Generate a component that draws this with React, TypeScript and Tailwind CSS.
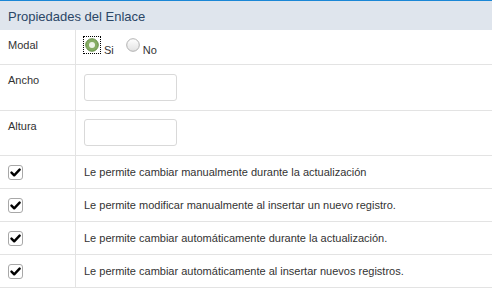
import React from 'react';

const options = [
  'Le permite cambiar manualmente durante la actualización',
  'Le permite modificar manualmente al insertar un nuevo registro.',
  'Le permite cambiar automáticamente durante la actualización.',
  'Le permite cambiar automáticamente al insertar nuevos registros.',
];

function Radio({ checked }: { checked?: boolean }) {
  return (
    <svg width="14" height="14" viewBox="0 0 14 14">
      <defs>
        <linearGradient id="off" x1="0" y1="0" x2="0" y2="1">
          <stop offset="0" stopColor="#ffffff" />
          <stop offset="1" stopColor="#e2e2e2" />
        </linearGradient>
      </defs>
      {checked ? (
        <>
          <circle cx="7" cy="7" r="6.3" fill="#86ac64" stroke="#5f8a40" strokeWidth="0.9" />
          <circle cx="7" cy="7" r="3" fill="#eef4e8" />
        </>
      ) : (
        <circle cx="7" cy="7" r="6.3" fill="url(#off)" stroke="#a9a9a9" strokeWidth="0.9" />
      )}
    </svg>
  );
}

function CheckBox() {
  return (
    <div className="w-[15px] h-[15px] rounded-[3px] border border-[#a8a8a8] bg-white flex items-center justify-center">
      <svg width="11" height="11" viewBox="0 0 11 11">
        <path d="M1.5 5.6 L4.2 8.3 L9.6 2.6" fill="none" stroke="#000" strokeWidth="2.4" strokeLinecap="round" strokeLinejoin="round" />
      </svg>
    </div>
  );
}

export default function App() {
  return (
    <div className="w-[492px] h-[289px] bg-white text-[#333] text-[11px] leading-[15px] font-['Liberation_Sans',Arial,sans-serif]">
      <div className="h-[30px] border-t border-[#1b87d6] bg-[#dfe5ed] px-2 pt-[8px] text-[13px] leading-[15px] text-[#2b4666]">
        Propiedades del Enlace
      </div>

      <div className="flex h-[35px] border-b border-[#e3e3e3]">
        <div className="w-[76px] shrink-0 border-r border-[#e3e3e3] pl-2 pt-2">Modal</div>
        <div className="flex items-start pl-[7px] pt-[6px]">
          <span className="flex h-[18px] w-[18px] items-center justify-center border border-dotted border-black">
            <Radio checked />
          </span>
          <span className="ml-[3px] mt-[8px] leading-[13px]">Si</span>
          <span className="ml-[12px] mt-[2px]">
            <Radio />
          </span>
          <span className="ml-[3px] mt-[8px] leading-[13px]">No</span>
        </div>
      </div>

      <div className="flex h-[46px] border-b border-[#e3e3e3]">
        <div className="w-[76px] shrink-0 border-r border-[#e3e3e3] pl-2 pt-2">Ancho</div>
        <div className="pl-2 pt-[9px]">
          <input className="block w-[93px] h-[27px] rounded-[3px] border border-[#d9d9d9] bg-white outline-none" />
        </div>
      </div>

      <div className="flex h-[45px] border-b border-[#e3e3e3]">
        <div className="w-[76px] shrink-0 border-r border-[#e3e3e3] pl-2 pt-2">Altura</div>
        <div className="pl-2 pt-2">
          <input className="block w-[93px] h-[27px] rounded-[3px] border border-[#d9d9d9] bg-white outline-none" />
        </div>
      </div>

      {options.map((text) => (
        <div key={text} className="flex h-[33px] border-b border-[#e3e3e3]">
          <div className="w-[76px] shrink-0 border-r border-[#e3e3e3] pl-2 flex items-center">
            <CheckBox />
          </div>
          <div className="pl-2 flex items-center">{text}</div>
        </div>
      ))}
    </div>
  );
}
